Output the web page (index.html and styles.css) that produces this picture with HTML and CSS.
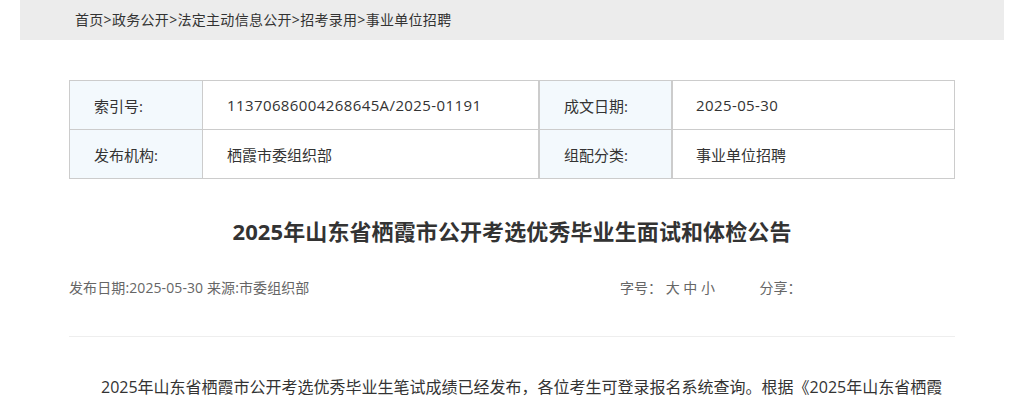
FILE: index.html
```html
<!DOCTYPE html>
<html lang="zh-CN">
<head>
    <meta charset="UTF-8">
    <title>2025年山东省栖霞市公开考选优秀毕业生面试和体检公告</title>
    <link rel="stylesheet" href="styles.css">
</head>
<body>
    <div class="page">
        <div class="crumb">
            <a href="#">首页</a>&gt;<a href="#">政务公开</a>&gt;<a href="#">法定主动信息公开</a>&gt;<a href="#">招考录用</a>&gt;<a href="#">事业单位招聘</a>
        </div>

        <div class="main">
            <table class="info">
                <tr>
                    <td class="label">索引号:</td>
                    <td class="value num">11370686004268645A/2025-01191</td>
                    <td class="label split">成文日期:</td>
                    <td class="value num">2025-05-30</td>
                </tr>
                <tr>
                    <td class="label">发布机构:</td>
                    <td class="value">栖霞市委组织部</td>
                    <td class="label split">组配分类:</td>
                    <td class="value">事业单位招聘</td>
                </tr>
            </table>

            <h1 class="title">2025年山东省栖霞市公开考选优秀毕业生面试和体检公告</h1>

            <div class="meta">
                <div class="source">发布日期:2025-05-30 来源:市委组织部</div>
                <div class="tools">
                    <span class="size">字号： <a href="#">大</a> <a href="#">中</a> <a href="#">小</a></span>
                    <span class="share">分享：</span>
                </div>
            </div>

            <div class="content">
                <p>2025年山东省栖霞市公开考选优秀毕业生笔试成绩已经发布，各位考生可登录报名系统查询。根据《2025年山东省栖霞市公开考选优秀毕业生简章》规定，现将面试和体检有关事项公告如下：</p>
            </div>
        </div>
    </div>
</body>
</html>
```

FILE: styles.css
```css
body {
    margin: 0;
    font-family: "Open Sans", "Noto Sans CJK SC", sans-serif;
    color: #333;
    background: #fff;
}

a {
    color: inherit;
    text-decoration: none;
}

.page {
    width: 984px;
    margin: 0 auto;
}

.crumb {
    height: 40px;
    line-height: 40px;
    background: #ececec;
    padding-left: 55px;
    font-size: 14px;
    letter-spacing: 0.3px;
    color: #333;
}

.main {
    padding: 40px 49px 0;
}

.info {
    width: 100%;
    border-collapse: collapse;
    font-size: 15px;
}

.info td {
    height: 48px;
    border: 1px solid #ccc;
    padding: 0 0 0 24px;
}

.info .label {
    background: #f3f9fd;
    color: #333;
}

.info .num {
    letter-spacing: 0.4px;
}

.info td:nth-child(1) {
    width: 108px;
}

.info td:nth-child(2) {
    width: 311px;
}

.info td:nth-child(3) {
    width: 107px;
}

.info .split {
    border-left: 2px solid #ccc;
}

.info .split + td {
    border-left: 2px solid #ccc;
    padding-left: 23px;
}

.title {
    margin: 37px 0 0;
    text-align: center;
    font-size: 22px;
    font-weight: bold;
    color: #333;
    line-height: 30px;
    letter-spacing: 0.1px;
}

.meta {
    display: flex;
    justify-content: space-between;
    margin-top: 32px;
    padding-bottom: 38px;
    border-bottom: 1px solid #eee;
    font-size: 14px;
    color: #666;
    line-height: 20px;
}

.source {
    letter-spacing: 0.1px;
}

.tools {
    width: 335px;
}

.share {
    margin-left: 41px;
}

.content {
    font-size: 16px;
    color: #333;
}

.content p {
    margin: 38px 0 0;
    text-indent: 2em;
    line-height: 24px;
}
```
